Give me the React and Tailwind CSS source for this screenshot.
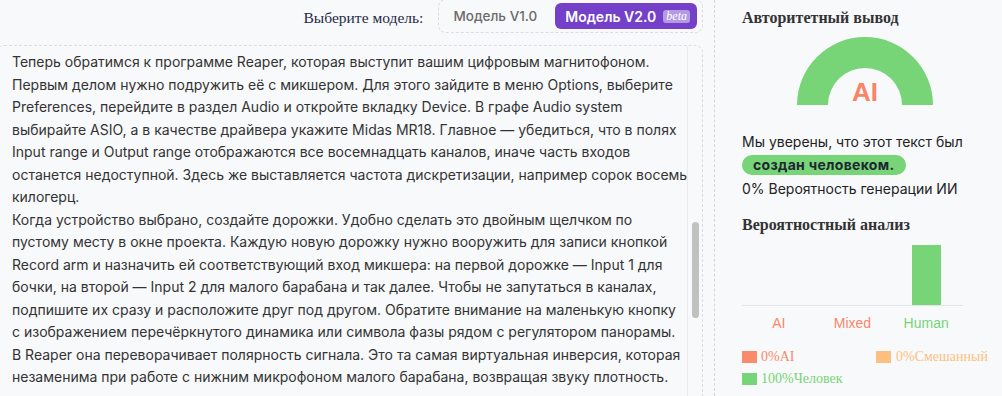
/**
 * App.jsx — AI text detector result view.
 *
 *   - Model switcher (V1.0 / V2.0 beta)
 *   - Analysed text panel with scrollbar
 *   - Verdict gauge + probability chart
 */

const lines = [
  "Теперь обратимся к программе Reaper, которая выступит вашим цифровым магнитофоном.",
  "Первым делом нужно подружить её с микшером. Для этого зайдите в меню Options, выберите",
  "Preferences, перейдите в раздел Audio и откройте вкладку Device. В графе Audio system",
  "выбирайте ASIO, а в качестве драйвера укажите Midas MR18. Главное — убедиться, что в полях",
  "Input range и Output range отображаются все восемнадцать каналов, иначе часть входов",
  "останется недоступной. Здесь же выставляется частота дискретизации, например сорок восемь",
  "килогерц.",
  "Когда устройство выбрано, создайте дорожки. Удобно сделать это двойным щелчком по",
  "пустому месту в окне проекта. Каждую новую дорожку нужно вооружить для записи кнопкой",
  "Record arm и назначить ей соответствующий вход микшера: на первой дорожке — Input 1 для",
  "бочки, на второй — Input 2 для малого барабана и так далее. Чтобы не запутаться в каналах,",
  "подпишите их сразу и расположите друг под другом. Обратите внимание на маленькую кнопку",
  "с изображением перечёркнутого динамика или символа фазы рядом с регулятором панорамы.",
  "В Reaper она переворачивает полярность сигнала. Это та самая виртуальная инверсия, которая",
  "незаменима при работе с нижним микрофоном малого барабана, возвращая звуку плотность.",
];

const bars = [
  { label: "AI", value: 0, color: "text-[#f8876b]" },
  { label: "Mixed", value: 0, color: "text-[#f8876b]" },
  { label: "Human", value: 100, color: "text-[#77d477]" },
];

function Gauge() {
  return (
    <svg width="136" height="74" viewBox="0 0 136 74">
      <path d="M0 68 A68 68 0 0 1 136 68 L105 68 A37 37 0 0 0 31 68 Z" fill="#77d477" />
      <text
        x="68"
        y="64"
        textAnchor="middle"
        fontFamily="'Liberation Sans', Arial, sans-serif"
        fontWeight="700"
        fontSize="26"
        fill="#fa8466"
      >
        AI
      </text>
    </svg>
  );
}

export default function App() {
  return (
    <div className="w-[1002px] h-[396px] overflow-hidden bg-[#f8f9fb] flex font-['Inter',sans-serif]">
      {/* ── Left: model switch + text ───────────────────────────── */}
      <div className="w-[714px] shrink-0 flex flex-col overflow-hidden">
        <div className="h-[45px] shrink-0 flex items-start justify-end pr-[11px]">
          <span className="mt-[6px] mr-[15px] font-['Liberation_Serif',serif] text-[15.5px] text-[#1e2a44]">
            Выберите модель:
          </span>
          <div className="-mt-px flex items-center gap-[4px] border border-dashed border-[#d9dce1] rounded-lg pt-[3px] pb-[3px] pl-[14px] pr-[5px]">
            <span className="pr-[14px] text-[13.5px] font-medium text-[#6b6b6b]">Модель V1.0</span>
            <span className="h-[26px] flex items-center pl-[10px] pr-[7px] rounded-md bg-[#7440c9] text-white text-[14px] font-semibold">
              Модель V2.0
              <span className="ml-[7px] px-[3px] h-[13px] flex items-center rounded-[3px] bg-[#b39ae3] font-['Liberation_Serif',serif] italic font-normal text-[12px] leading-none">
                beta
              </span>
            </span>
          </div>
        </div>

        <div className="-ml-[4px] mr-[11px] h-[380px] shrink-0 flex border border-dashed border-[#d9dce1] rounded-lg overflow-hidden">
          <div className="flex-1 min-w-0 pl-[15px] pt-[5px] text-[14px] leading-[22.5px] text-[#333]">
            {lines.map((line, i) => (
              <div key={i} className="whitespace-nowrap">
                {line}
              </div>
            ))}
          </div>
          <div className="w-[15px] shrink-0 border-l border-[#ebebeb] pl-[4px]">
            <div className="mt-[176px] w-[7px] h-[96px] rounded-full bg-[#c1c1c1]" />
          </div>
        </div>
      </div>

      {/* ── Right: verdict ─────────────────────────────────────── */}
      <div className="flex-1 border-l border-dashed border-[#d4d6db] pl-[27px] pr-[17px] pt-[8px]">
        <h2 className="font-['Liberation_Serif',serif] font-bold text-[16px] leading-[20px] text-[#333]">
          Авторитетный вывод
        </h2>
        <div className="mt-[9px] ml-[55px] h-[68px]">
          <Gauge />
        </div>
        <p className="mt-[27px] text-[14px] leading-[20px] text-[#222]">
          Мы уверены, что этот текст был
        </p>
        <span className="mt-px inline-block rounded-full bg-[#77d477] pl-[11px] pr-[12px] text-[14px] leading-[20px] font-bold text-[#1f2633] tracking-[0.3px]">
          создан человеком.
        </span>
        <p className="mt-[3px] text-[14px] leading-[20px] text-[#222]">0% Вероятность генерации ИИ</p>

        <h2 className="mt-[16px] font-['Liberation_Serif',serif] font-bold text-[16px] leading-[20px] text-[#333]">
          Вероятностный анализ
        </h2>

        <div className="w-[221px] mt-[10px]">
          <div className="h-[61px] grid grid-cols-3 items-end border-b border-[#e3e5e8]">
            {bars.map((b) => (
              <div key={b.label} className="flex justify-center">
                <div className="w-[29px] bg-[#77d477]" style={{ height: `${(b.value / 100) * 60}px` }} />
              </div>
            ))}
          </div>
          <div className="grid grid-cols-3 mt-[8px]">
            {bars.map((b) => (
              <div
                key={b.label}
                className={`text-center font-['Liberation_Sans',Arial,sans-serif] text-[14px] leading-[18px] ${b.color}`}
              >
                {b.label}
              </div>
            ))}
          </div>
        </div>

        <div className="mt-[17px] grid grid-cols-[134px_1fr] gap-y-[7px] font-['Liberation_Serif',serif] text-[14px] leading-[15px]">
          <div className="flex items-center gap-[4px] text-[#fa8a6c]">
            <span className="w-[15px] h-[12px] bg-[#fa8a6c]" />
            0%AI
          </div>
          <div className="flex items-center gap-[5px] text-[#fec07f]">
            <span className="w-[15px] h-[12px] bg-[#fec07f]" />
            0%Смешанный
          </div>
          <div className="flex items-center gap-[4px] text-[#77d477]">
            <span className="w-[15px] h-[12px] bg-[#77d477]" />
            100%Человек
          </div>
        </div>
      </div>
    </div>
  );
}
